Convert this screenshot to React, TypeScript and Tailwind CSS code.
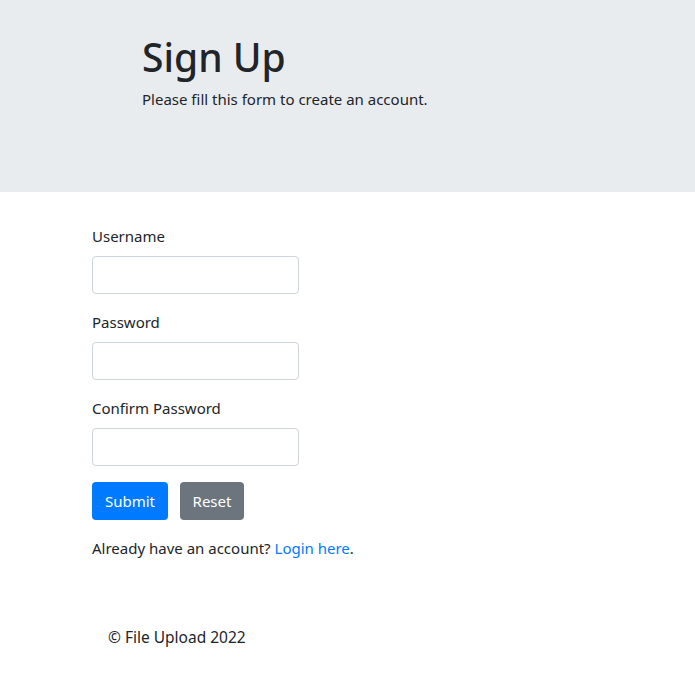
import React from "react";

export default function App() {
  return (
    <div className="min-h-[690px] bg-white text-[#212529] text-[15px] leading-[24px]" style={{ fontFamily: '"Noto Sans", "Open Sans", sans-serif' }}>
      <div className="bg-[#e9ecef] h-[192px] pt-[34px] pl-[142px]">
        <h1 className="text-[39px] leading-[46px] font-medium mb-[7px]">Sign Up</h1>
        <p>Please fill this form to create an account.</p>
      </div>
      <form className="mt-[32px] pl-[92px]" onSubmit={(e) => e.preventDefault()}>
        <div className="mb-[16px]">
          <label className="block mb-[8px] h-[24px]">Username</label>
          <input type="text" className="block w-[207px] h-[38px] border border-[#ced4da] rounded-[4px] px-3" />
        </div>
        <div className="mb-[16px]">
          <label className="block mb-[8px] h-[24px]">Password</label>
          <input type="password" className="block w-[207px] h-[38px] border border-[#ced4da] rounded-[4px] px-3" />
        </div>
        <div className="mb-[16px]">
          <label className="block mb-[8px] h-[24px]">Confirm Password</label>
          <input type="password" className="block w-[207px] h-[38px] border border-[#ced4da] rounded-[4px] px-3" />
        </div>
        <div className="mb-[16px] flex gap-[12px]">
          <button type="submit" className="h-[38px] w-[76px] rounded-[4px] bg-[#007bff] text-white text-[15px]">Submit</button>
          <button type="reset" className="h-[38px] w-[64px] rounded-[4px] bg-[#6c757d] text-white text-[15px]">Reset</button>
        </div>
        <p>
          Already have an account? <a href="#" className="text-[#007bff]">Login here</a>.
        </p>
      </form>
      <footer className="pl-[108px] mt-[65px]">
        <p className="text-[15.5px]">© File Upload 2022</p>
      </footer>
    </div>
  );
}
